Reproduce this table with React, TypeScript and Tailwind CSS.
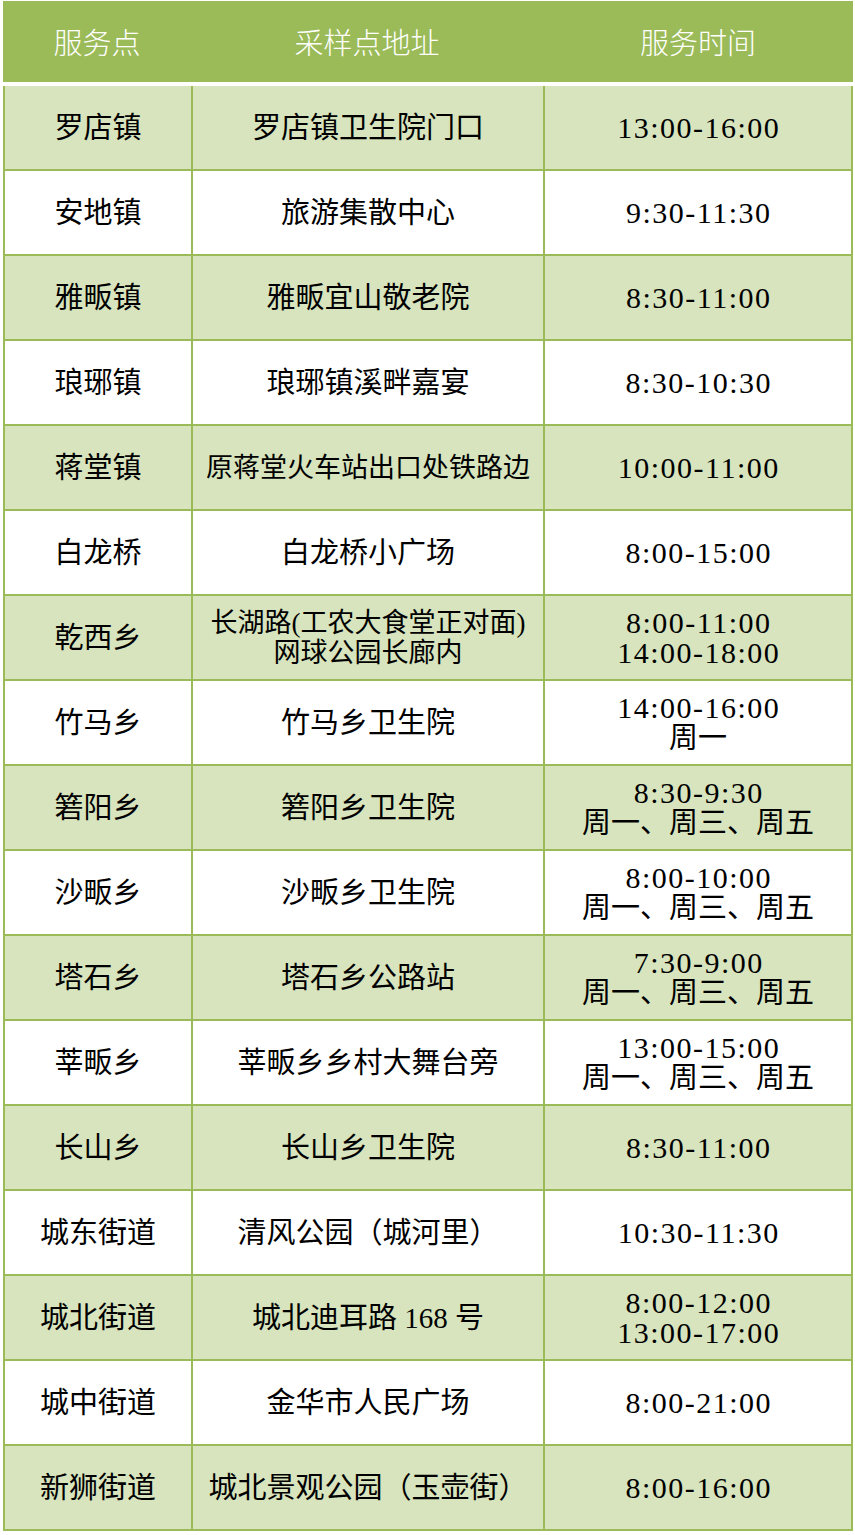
import React from "react";

type Row = { a: string; b: string[]; c: string[]; small?: boolean };

const rows: Row[] = [
  { a: "罗店镇", b: ["罗店镇卫生院门口"], c: ["13:00-16:00"] },
  { a: "安地镇", b: ["旅游集散中心"], c: ["9:30-11:30"] },
  { a: "雅畈镇", b: ["雅畈宜山敬老院"], c: ["8:30-11:00"] },
  { a: "琅琊镇", b: ["琅琊镇溪畔嘉宴"], c: ["8:30-10:30"] },
  { a: "蒋堂镇", b: ["原蒋堂火车站出口处铁路边"], c: ["10:00-11:00"], small: true },
  { a: "白龙桥", b: ["白龙桥小广场"], c: ["8:00-15:00"] },
  { a: "乾西乡", b: ["长湖路(工农大食堂正对面)", "网球公园长廊内"], c: ["8:00-11:00", "14:00-18:00"], small: true },
  { a: "竹马乡", b: ["竹马乡卫生院"], c: ["14:00-16:00", "周一"] },
  { a: "箬阳乡", b: ["箬阳乡卫生院"], c: ["8:30-9:30", "周一、周三、周五"] },
  { a: "沙畈乡", b: ["沙畈乡卫生院"], c: ["8:00-10:00", "周一、周三、周五"] },
  { a: "塔石乡", b: ["塔石乡公路站"], c: ["7:30-9:00", "周一、周三、周五"] },
  { a: "莘畈乡", b: ["莘畈乡乡村大舞台旁"], c: ["13:00-15:00", "周一、周三、周五"] },
  { a: "长山乡", b: ["长山乡卫生院"], c: ["8:30-11:00"] },
  { a: "城东街道", b: ["清风公园（城河里）"], c: ["10:30-11:30"] },
  { a: "城北街道", b: ["城北迪耳路 168 号"], c: ["8:00-12:00", "13:00-17:00"] },
  { a: "城中街道", b: ["金华市人民广场"], c: ["8:00-21:00"] },
  { a: "新狮街道", b: ["城北景观公园（玉壶街）"], c: ["8:00-16:00"] },
];

const isTime = (s: string) => /^[0-9:\-]+$/.test(s);

export default function App() {
  return (
    <div className="w-[855px] h-[1535px] bg-white">
      <div className="ml-[3px] pt-[1px] w-[850px]">
        <div className="h-[81px] bg-[#9bbb59] grid grid-cols-[188px_352px_310px] text-white text-[29px] font-['Noto_Sans_CJK_SC',sans-serif] font-light">
          <div className="flex items-center justify-center">服务点</div>
          <div className="flex items-center justify-center">采样点地址</div>
          <div className="flex items-center justify-center">服务时间</div>
        </div>
        <div className="h-[4px]" />
        <div className="bg-[#9bbb59] px-[2px] pb-[2px] grid grid-cols-[186px_350px_306px] gap-[2px] text-black text-[29px] leading-[30px] font-['Liberation_Serif','Noto_Sans_CJK_SC',serif]">
          {rows.map((r, i) => {
            const bg = i % 2 === 0 ? "bg-[#d7e4bd]" : "bg-white";
            return (
              <React.Fragment key={i}>
                <div className={`${bg} h-[83px] flex items-center justify-center`}>{r.a}</div>
                <div
                  className={`${bg} h-[83px] flex flex-col items-center justify-center ${
                    r.small ? "text-[27px]" : ""
                  }`}
                >
                  {r.b.map((t, j) => (
                    <div key={j} className="whitespace-nowrap">
                      {t}
                    </div>
                  ))}
                </div>
                <div className={`${bg} h-[83px] flex flex-col items-center justify-center`}>
                  {r.c.map((t, j) => (
                    <div
                      key={j}
                      className={isTime(t) ? "text-[30px] leading-[30px] tracking-[1.5px] pl-[1.5px]" : ""}
                    >
                      {t}
                    </div>
                  ))}
                </div>
              </React.Fragment>
            );
          })}
        </div>
      </div>
    </div>
  );
}
